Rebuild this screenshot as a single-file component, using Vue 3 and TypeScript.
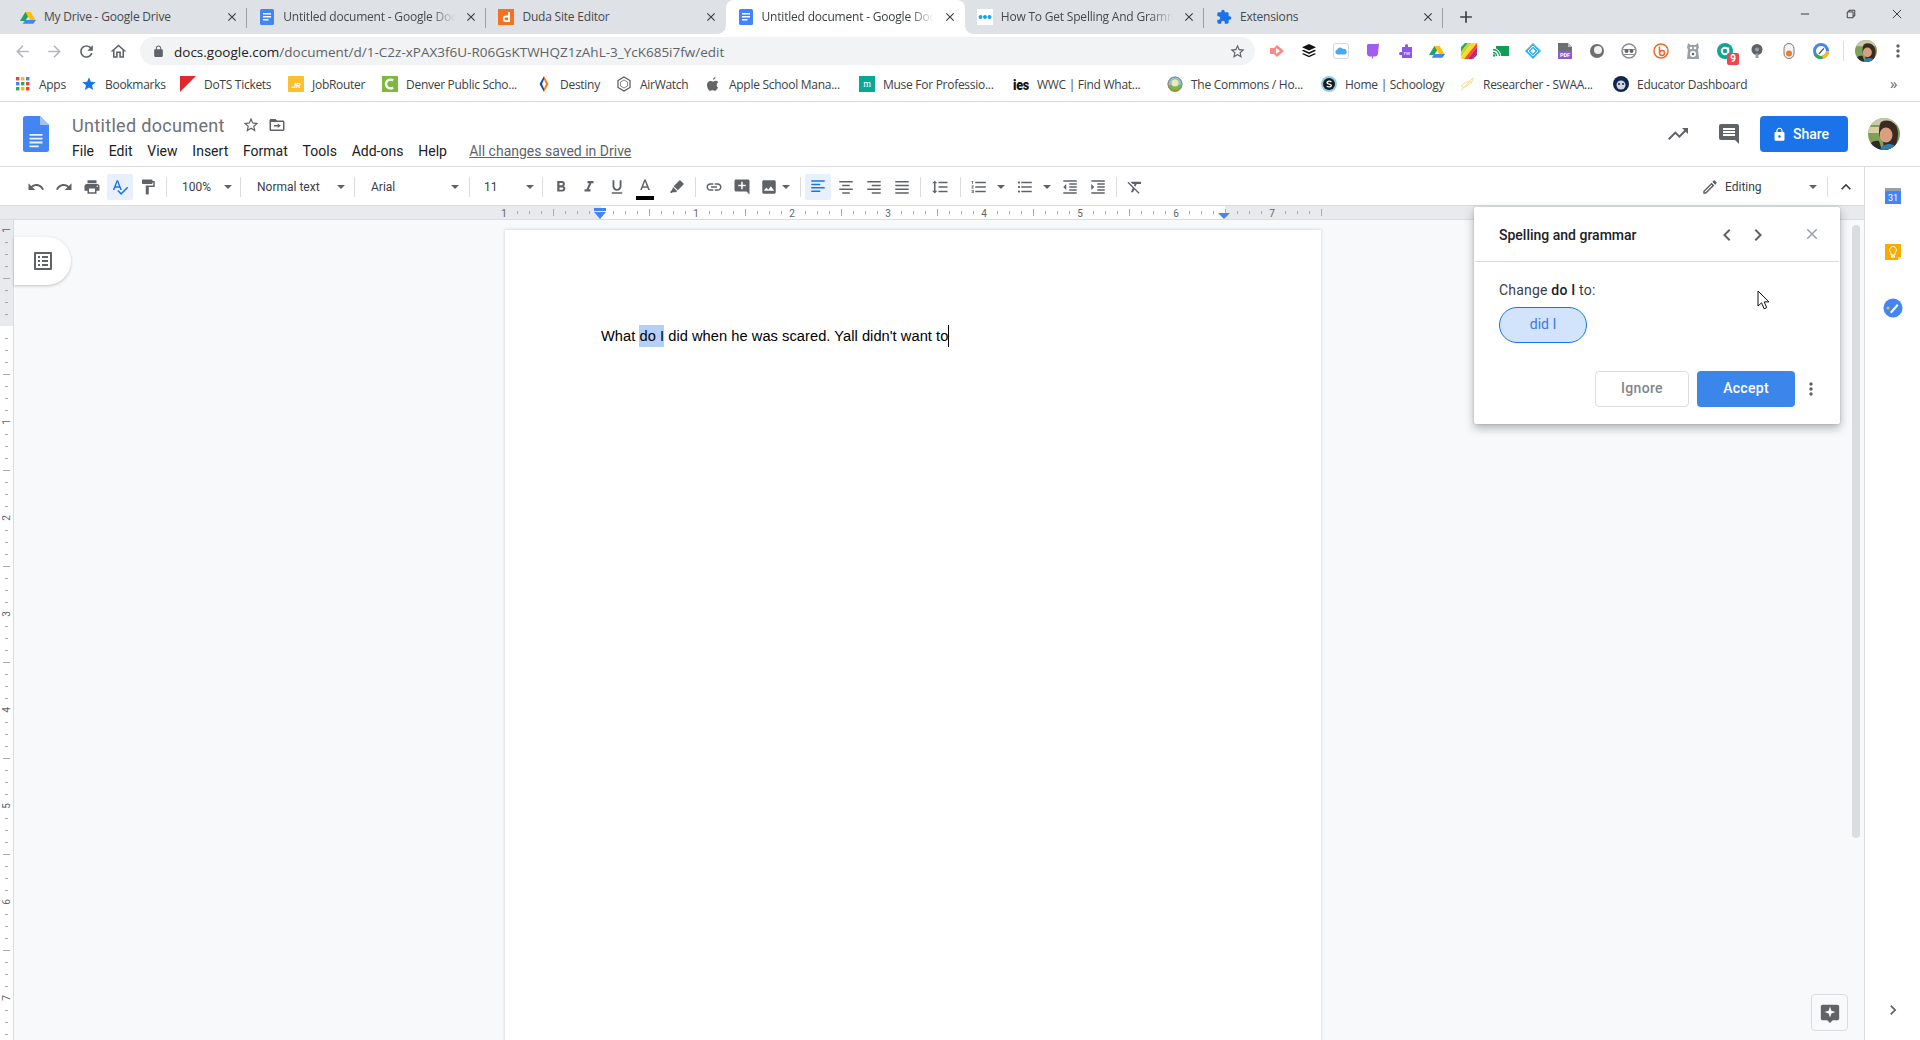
<script setup lang="ts">
const ic: Record<string, string> = {
  undo: 'M12.5 8c-2.65 0-5.05.99-6.9 2.6L2 7v9h9l-3.62-3.62c1.39-1.16 3.16-1.88 5.12-1.88 3.54 0 6.55 2.31 7.6 5.5l2.37-.78C21.08 11.03 17.15 8 12.5 8z',
  redo: 'M18.4 10.6C16.55 8.99 14.15 8 11.5 8c-4.65 0-8.58 3.03-9.96 7.22L3.9 16c1.05-3.19 4.05-5.5 7.6-5.5 1.95 0 3.73.72 5.12 1.88L13 16h9V7l-3.6 3.6z',
  print: 'M19 8H5c-1.66 0-3 1.34-3 3v6h4v4h12v-4h4v-6c0-1.66-1.34-3-3-3zm-3 11H8v-5h8v5zm3-7c-.55 0-1-.45-1-1s.45-1 1-1 1 .45 1 1-.45 1-1 1zm-1-9H6v4h12V3z',
  spell: 'M12.45 16h2.09L9.43 3H7.57L2.46 16h2.09l1.12-3h5.64l1.14 3zm-6.02-5L8.5 5.48 10.57 11H6.43zm15.16.59l-8.09 8.09L9.83 16l-1.41 1.41 5.09 5.09L23 13l-1.41-1.41z',
  paint: 'M18 4V3c0-.55-.45-1-1-1H5c-.55 0-1 .45-1 1v4c0 .55.45 1 1 1h12c.55 0 1-.45 1-1V6h1v4H9v11c0 .55.45 1 1 1h2c.55 0 1-.45 1-1v-9h8V4h-3z',
  bold: 'M15.6 10.79c.97-.67 1.65-1.77 1.65-2.79 0-2.26-1.75-4-4-4H7v14h7.04c2.09 0 3.71-1.7 3.71-3.79 0-1.52-.86-2.82-2.15-3.42zM10 6.5h3c.83 0 1.5.67 1.5 1.5s-.67 1.5-1.5 1.5h-3v-3zm3.5 9H10v-3h3.5c.83 0 1.5.67 1.5 1.5s-.67 1.5-1.5 1.5z',
  italic: 'M10 4v3h2.21l-3.42 8H6v3h8v-3h-2.21l3.42-8H18V4z',
  underline: 'M12 17c3.31 0 6-2.69 6-6V3h-2.5v8c0 1.93-1.57 3.5-3.5 3.5S8.5 12.93 8.5 11V3H6v8c0 3.31 2.69 6 6 6zm-7 2v2h14v-2H5z',
  color: 'M11 2L5.5 16h2.25l1.12-3h6.25l1.12 3h2.25L13 2h-2zm-1.38 9L12 4.67 14.38 11H9.62z',
  hilite: 'M16.6 3.3l4.1 4.1c.4.4.4 1 0 1.4l-7.6 7.6-5.5-5.5 7.6-7.6c.4-.4 1-.4 1.4 0zM6.6 11.9l5.5 5.5-1.6 1.6H6.2L5 20.2 2.6 19l3.1-3.6z',
  link: 'M3.9 12c0-1.71 1.39-3.1 3.1-3.1h4V7H7c-2.76 0-5 2.24-5 5s2.24 5 5 5h4v-1.9H7c-1.71 0-3.1-1.39-3.1-3.1zM8 13h8v-2H8v2zm9-6h-4v1.9h4c1.71 0 3.1 1.39 3.1 3.1s-1.39 3.1-3.1 3.1h-4V17h4c2.76 0 5-2.24 5-5s-2.24-5-5-5z',
  addc: 'M21.99 4c0-1.1-.89-2-1.99-2H4c-1.1 0-2 .9-2 2v12c0 1.1.9 2 2 2h14l4 4-.01-18zM17 11h-4v4h-2v-4H7V9h4V5h2v4h4v2z',
  image: 'M21 19V5c0-1.1-.9-2-2-2H5c-1.1 0-2 .9-2 2v14c0 1.1.9 2 2 2h14c1.1 0 2-.9 2-2zM8.5 12.5l2.5 3.01L14.5 11l4.5 6H5l3.5-4.5z',
  left: 'M3 3h18v2H3zM3 7.5h12v2H3zM3 12h18v2H3zM3 16.5h12v2H3z',
  center: 'M3 4h18v2H3zM7 9h10v2H7zM3 14h18v2H3zM7 19h10v2H7z',
  right: 'M3 4h18v2H3zM9 9h12v2H9zM3 14h18v2H3zM9 19h12v2H9z',
  justify: 'M3 4h18v2H3zM3 9h18v2H3zM3 14h18v2H3zM3 19h18v2H3z',
  spacing: 'M6 7h2.5L5 3.5 1.5 7H4v10H1.5L5 20.5 8.5 17H6V7zm4-2v2h12V5H10zm0 14h12v-2H10v2zm0-6h12v-2H10v2z',
  numbers: 'M2 17h2v.5H3v1h1v.5H2v1h3v-4H2v1zm1-9h1V4H2v1h1v3zm-1 3h1.8L2 13.1v.9h3v-1H3.2L5 10.9V10H2v1zm5-6v2h14V5H7zm0 14h14v-2H7v2zm0-6h14v-2H7v2z',
  bullets: 'M4 10.5c-.83 0-1.5.67-1.5 1.5s.67 1.5 1.5 1.5 1.5-.67 1.5-1.5-.67-1.5-1.5-1.5zm0-6c-.83 0-1.5.67-1.5 1.5S3.17 7.5 4 7.5 5.5 6.83 5.5 6 4.83 4.5 4 4.5zm0 12c-.83 0-1.5.68-1.5 1.5s.68 1.5 1.5 1.5 1.5-.68 1.5-1.5-.67-1.5-1.5-1.5zM7 19h14v-2H7v2zm0-6h14v-2H7v2zm0-8v2h14V5H7z',
  outdent: 'M11 17h10v-2H11v2zm-8-5l4 4V8l-4 4zm0 9h18v-2H3v2zM3 3v2h18V3H3zm8 6h10V7H11v2zm0 4h10v-2H11v2z',
  indent: 'M3 21h18v-2H3v2zM3 8v8l4-4-4-4zm8 9h10v-2H11v2zM3 3v2h18V3H3zm8 6h10V7H11v2zm0 4h10v-2H11v2z',
  clear: 'M3.27 5L2 6.27l6.97 6.97L6.5 19h3l1.57-3.66L16.73 21 18 19.73 3.55 5.27 3.27 5zM6 5v.18L8.82 8h2.4l-.72 1.68 2.1 2.1L14.21 8H20V5H6z',
  pencil: 'M14.06 9.02l.92.92L5.92 19H5v-.92l9.06-9.06M17.66 3c-.25 0-.51.1-.7.29l-1.83 1.83 3.75 3.75 1.83-1.83c.39-.39.39-1.02 0-1.41l-2.34-2.34c-.2-.2-.45-.29-.71-.29zm-3.6 3.19L3 17.25V21h3.75L17.81 9.94l-3.75-3.75z',
  trend: 'M16 6l2.29 2.29-4.88 4.88-4-4L2 16.59 3.41 18l6-6 4 4 6.3-6.29L22 12V6z',
  comment: 'M21.99 4c0-1.1-.89-2-1.99-2H4c-1.1 0-2 .9-2 2v12c0 1.1.9 2 2 2h14l4 4-.01-18zM18 14H6v-2h12v2zm0-3H6V9h12v2zm0-3H6V6h12v2z',
  lock: 'M18 8h-1V6c0-2.76-2.24-5-5-5S7 3.24 7 6v2H6c-1.1 0-2 .9-2 2v10c0 1.1.9 2 2 2h12c1.1 0 2-.9 2-2V10c0-1.1-.9-2-2-2zm-6 9c-1.1 0-2-.9-2-2s.9-2 2-2 2 .9 2 2-.9 2-2 2zm3.1-9H8.9V6c0-1.71 1.39-3.1 3.1-3.1 1.71 0 3.1 1.39 3.1 3.1v2z',
  star: 'M22 9.24l-7.19-.62L12 2 9.19 8.63 2 9.24l5.46 4.73L5.82 21 12 17.27 18.18 21l-1.63-7.03L22 9.24zM12 15.4l-3.76 2.27 1-4.28-3.32-2.88 4.38-.38L12 6.1l1.71 4.04 4.38.38-3.32 2.88 1 4.28L12 15.4z',
  folder: 'M20 6h-8l-2-2H4c-1.1 0-2 .9-2 2v12c0 1.1.9 2 2 2h16c1.1 0 2-.9 2-2V8c0-1.1-.9-2-2-2zm0 12H4V8h16v10zM13 10v2H8v2h5v2l4-3z',
  toc: 'M19 5v14H5V5h14m1.1-2H3.9c-.5 0-.9.4-.9.9v16.2c0 .4.4.9.9.9h16.2c.4 0 .9-.5.9-.9V3.9c0-.5-.5-.9-.9-.9zM11 7h6v2h-6V7zm0 4h6v2h-6v-2zm0 4h6v2h-6zM7 7h2v2H7zm0 4h2v2H7zm0 4h2v2H7z',
  back: 'M20 11H7.83l5.59-5.59L12 4l-8 8 8 8 1.41-1.41L7.83 13H20v-2z',
  forward: 'M12 4l-1.41 1.41L16.17 11H4v2h12.17l-5.58 5.59L12 20l8-8z',
  refresh: 'M17.65 6.35C16.2 4.9 14.21 4 12 4c-4.42 0-7.99 3.58-7.99 8s3.57 8 7.99 8c3.73 0 6.84-2.55 7.73-6h-2.08c-.82 2.33-3.04 4-5.65 4-3.31 0-6-2.69-6-6s2.69-6 6-6c1.66 0 3.14.69 4.22 1.78L13 11h7V4l-2.35 2.35z',
  home: 'M12 5.69l5 4.5V18h-2v-6H9v6H7v-7.81l5-4.5M12 3L2 12h3v8h6v-6h2v6h6v-8h3L12 3z',
  close: 'M19 6.41L17.59 5 12 10.59 6.41 5 5 6.41 10.59 12 5 17.59 6.41 19 12 13.41 17.59 19 19 17.59 13.41 12z',
  chevL: 'M15.41 7.41L14 6l-6 6 6 6 1.41-1.41L10.83 12z',
  chevR: 'M10 6L8.59 7.41 13.17 12l-4.58 4.59L10 18l6-6z',
  chevU: 'M12 8l-6 6 1.41 1.41L12 10.83l4.59 4.58L18 14z',
  dots: 'M12 8c1.1 0 2-.9 2-2s-.9-2-2-2-2 .9-2 2 .9 2 2 2zm0 2c-1.1 0-2 .9-2 2s.9 2 2 2 2-.9 2-2-.9-2-2-2zm0 6c-1.1 0-2 .9-2 2s.9 2 2 2 2-.9 2-2-.9-2-2-2z',
  puzzle: 'M20.5 11H19V7c0-1.1-.9-2-2-2h-4V3.5C13 2.12 11.88 1 10.5 1S8 2.12 8 3.5V5H4c-1.1 0-1.99.9-1.99 2v3.8H3.5c1.49 0 2.7 1.21 2.7 2.7s-1.21 2.7-2.7 2.7H2V20c0 1.1.9 2 2 2h3.8v-1.5c0-1.49 1.21-2.7 2.7-2.7 1.49 0 2.7 1.21 2.7 2.7V22H17c1.1 0 2-.9 2-2v-4h1.5c1.38 0 2.5-1.12 2.5-2.5S21.88 11 20.5 11z',
}

interface Tab { title: string; icon: string; active?: boolean; sep?: boolean; fade?: boolean }
const tabs: Tab[] = [
  { title: 'My Drive - Google Drive', icon: 'drive', sep: true },
  { title: 'Untitled document - Google Docs', icon: 'docs', sep: true, fade: true },
  { title: 'Duda Site Editor', icon: 'duda' },
  { title: 'Untitled document - Google Docs', icon: 'docs', active: true, fade: true },
  { title: 'How To Get Spelling And Grammar', icon: 'dotsfav', sep: true, fade: true },
  { title: 'Extensions', icon: 'puzz', sep: true },
]

const bookmarks = [
  { t: 'Apps', i: 'apps', w: 66 },
  { t: 'Bookmarks', i: 'bstar', w: 99 },
  { t: 'DoTS Tickets', i: 'dots-t', w: 108 },
  { t: 'JobRouter', i: 'jr', w: 94 },
  { t: 'Denver Public Scho...', i: 'dps', w: 154 },
  { t: 'Destiny', i: 'destiny', w: 80 },
  { t: 'AirWatch', i: 'air', w: 89 },
  { t: 'Apple School Mana...', i: 'apple', w: 154 },
  { t: 'Muse For Professio...', i: 'muse', w: 154 },
  { t: 'WWC | Find What...', i: 'ies', w: 154 },
  { t: 'The Commons / Ho...', i: 'commons', w: 154 },
  { t: 'Home | Schoology', i: 'school', w: 138 },
  { t: 'Researcher - SWAA...', i: 'research', w: 154 },
  { t: 'Educator Dashboard', i: 'edu', w: 200 },
]

const extensions = ['e-red', 'e-stack', 'e-cloud', 'e-tag', 'e-rw', 'drive', 'e-color', 'e-cast', 'e-diamond', 'e-pdf', 'e-ring', 'e-glass', 'e-b', 'e-owl', 'e-a', 'e-bulb', 'e-pill', 'e-compass']

interface Tool { k: 'btn' | 'sep' | 'sel' | 'arrow'; i?: string; w?: number; ml?: number; on?: boolean; text?: string; pad?: number; extra?: string }
const tools: Tool[] = [
  { k: 'btn', i: 'undo', w: 28 }, { k: 'btn', i: 'redo', w: 28 }, { k: 'btn', i: 'print', w: 28 },
  { k: 'btn', i: 'spell', w: 28, on: true }, { k: 'btn', i: 'paint', w: 28 },
  { k: 'sep', ml: 4 },
  { k: 'sel', text: '100%', w: 65, ml: 4, pad: 11 },
  { k: 'sep', ml: 4 },
  { k: 'sel', text: 'Normal text', w: 104, ml: 4, pad: 12 },
  { k: 'sep', ml: 5 },
  { k: 'sel', text: 'Arial', w: 104, ml: 4, pad: 12 },
  { k: 'sep', ml: 6 },
  { k: 'sel', text: '11', w: 64, ml: 4, pad: 10 },
  { k: 'sep', ml: 4 },
  { k: 'btn', i: 'bold', w: 28, ml: 4 }, { k: 'btn', i: 'italic', w: 28 }, { k: 'btn', i: 'underline', w: 28 },
  { k: 'btn', i: 'color', w: 28, extra: 'bar' }, { k: 'btn', i: 'hilite', w: 36 },
  { k: 'sep' },
  { k: 'btn', i: 'link', w: 28, ml: 4 }, { k: 'btn', i: 'addc', w: 28 }, { k: 'btn', i: 'image', w: 26 },
  { k: 'arrow', w: 8 },
  { k: 'sep', ml: 10 },
  { k: 'btn', i: 'left', w: 28, ml: 3, on: true }, { k: 'btn', i: 'center', w: 28 }, { k: 'btn', i: 'right', w: 28 }, { k: 'btn', i: 'justify', w: 28 },
  { k: 'sep', ml: 4 },
  { k: 'btn', i: 'spacing', w: 28, ml: 5 },
  { k: 'sep', ml: 6 },
  { k: 'btn', i: 'numbers', w: 28, ml: 4 }, { k: 'arrow', w: 14, ml: 1 },
  { k: 'btn', i: 'bullets', w: 28, ml: 3 }, { k: 'arrow', w: 14, ml: 1 },
  { k: 'btn', i: 'outdent', w: 28, ml: 2 }, { k: 'btn', i: 'indent', w: 28 },
  { k: 'sep', ml: 4 },
  { k: 'btn', i: 'clear', w: 28, ml: 4 },
]

const menus = ['File', 'Edit', 'View', 'Insert', 'Format', 'Tools', 'Add-ons', 'Help']

const hTicks = Array.from({ length: 69 }, (_, i) => ({
  x: 505 + 12 * i,
  kind: i % 8 === 0 ? 'label' : i % 8 === 4 ? 'long' : 'short',
  n: Math.abs(i / 8 - 1),
}))
const vTicks = Array.from({ length: 68 }, (_, i) => ({
  y: 10 + 12 * i,
  kind: i % 8 === 0 ? 'label' : i % 8 === 4 ? 'long' : 'short',
  n: Math.abs(i / 8 - 1),
}))
</script>

<template>
  <div class="root">
    <svg class="defs" aria-hidden="true">
      <defs>
        <symbol id="drive" viewBox="0 0 24 24">
          <path d="M8 3h8l-8 13.5H0z" fill="#1ea362" transform="translate(0 1.5)" />
          <path d="M8 3h8l8 13.5h-8z" fill="#ffc107" transform="translate(0 1.5)" />
          <path d="M8 16.5h16L20 22H4z" fill="#4285f4" />
        </symbol>
        <symbol id="docs" viewBox="0 0 16 16">
          <rect x="1" width="14" height="16" rx="1.5" fill="#4285f4" />
          <path d="M4 4h8v1.6H4zM4 7h8v1.6H4zM4 10h5.5v1.6H4z" fill="#fff" />
        </symbol>
        <symbol id="duda" viewBox="0 0 16 16">
          <rect width="16" height="16" fill="#f5701f" />
          <path d="M10 3h2v10H8a3.2 3.2 0 0 1 0-6.4h2zM8 8.4a1.4 1.4 0 0 0 0 2.8h2V8.4z" fill="#fff" />
        </symbol>
        <symbol id="dotsfav" viewBox="0 0 16 16">
          <rect width="16" height="16" fill="#fff" />
          <circle cx="3.5" cy="8" r="2" fill="#12a5ea" /><circle cx="8" cy="8" r="2" fill="#12a5ea" /><circle cx="12.5" cy="8" r="2" fill="#12a5ea" />
        </symbol>
        <symbol id="puzz" viewBox="0 0 24 24"><path :d="ic.puzzle" fill="#1a73e8" /></symbol>
        <symbol id="apps" viewBox="0 0 16 16">
          <g>
            <rect width="3.4" height="3.4" x="1" y="1" fill="#ea4335" /><rect width="3.4" height="3.4" x="6" y="1" fill="#fbbc04" /><rect width="3.4" height="3.4" x="11" y="1" fill="#4285f4" />
            <rect width="3.4" height="3.4" x="1" y="6" fill="#4285f4" /><rect width="3.4" height="3.4" x="6" y="6" fill="#34a853" /><rect width="3.4" height="3.4" x="11" y="6" fill="#ea4335" />
            <rect width="3.4" height="3.4" x="1" y="11" fill="#34a853" /><rect width="3.4" height="3.4" x="6" y="11" fill="#fbbc04" /><rect width="3.4" height="3.4" x="11" y="11" fill="#ea4335" />
          </g>
        </symbol>
        <symbol id="bstar" viewBox="0 0 24 24"><path d="M12 17.27L18.18 21l-1.64-7.03L22 9.24l-7.19-.61L12 2 9.19 8.63 2 9.24l5.46 4.73L5.82 21z" fill="#1a73e8" /></symbol>
        <symbol id="dots-t" viewBox="0 0 16 16"><path d="M0 0h16L0 16z" fill="#e3282d" /></symbol>
        <symbol id="jr" viewBox="0 0 16 16"><rect width="16" height="16" rx="1" fill="#fbc02d" /><text x="8" y="11.5" font-size="8" font-family="Roboto" font-style="italic" font-weight="700" text-anchor="middle" fill="#fff">JR</text></symbol>
        <symbol id="dps" viewBox="0 0 16 16"><rect width="16" height="16" fill="#7cb93e" /><path d="M11.8 3.6A5.6 5.6 0 1 0 11.8 12.4L10.4 10.6A3.2 3.2 0 1 1 10.4 5.4z" fill="#fff" /></symbol>
        <symbol id="destiny" viewBox="0 0 16 16"><path d="M8 0L3.500 8 8 16V12.500L6 8 8 3.500z" fill="#1a4ea1" /><path d="M8 0l4.500 8L8 16V12.500L10 8 8 3.500z" fill="#f47b20" /></symbol>
        <symbol id="air" viewBox="0 0 16 16"><path d="M8 1l6 3.500v7L8 15l-6-3.500v-7z" fill="none" stroke="#555" stroke-width="1.200" /><path d="M8 4l3.500 2v4L8 12l-3.500-2V6z" fill="none" stroke="#888" /></symbol>
        <symbol id="apple" viewBox="0 0 16 16"><path d="M10.500 1c.1 1.300-1 2.700-2.400 2.700C8 2.400 9.200 1.100 10.500 1zM13 11.300c-.6 1.400-1.800 3.500-3 3.500-1 0-1.300-.6-2.400-.6-1.200 0-1.500.6-2.400.6C3.600 14.800 2 11.700 2 9c0-2.600 1.700-4.100 3.300-4.100 1.100 0 1.900.7 2.500.7s1.600-.8 2.800-.8c.6 0 2 .2 2.700 1.400-2.200 1.400-1.800 4.200-.3 5.100z" fill="#666" /></symbol>
        <symbol id="muse" viewBox="0 0 16 16"><rect width="16" height="16" fill="#08a893" /><text x="8" y="11" font-size="10" font-family="Liberation Serif" text-anchor="middle" fill="#fff">m</text></symbol>
        <symbol id="ies" viewBox="0 0 16 16"><text x="0" y="14" font-size="14" font-family="Roboto" font-weight="900" textLength="16" lengthAdjust="spacingAndGlyphs" fill="#111">ies</text></symbol>
        <symbol id="commons" viewBox="0 0 16 16"><circle cx="8" cy="8" r="7.500" fill="#7dc6e8" /><path d="M1 9h14a7 7 0 0 1-14 0z" fill="#7ab648" /><circle cx="8" cy="7" r="3.500" fill="#f4e6b0" /><circle cx="8" cy="8" r="7" fill="none" stroke="#a97b3a" /></symbol>
        <symbol id="school" viewBox="0 0 16 16"><circle cx="8" cy="8" r="8" fill="#8fcdf0" /><circle cx="8" cy="8" r="6" fill="#1b1b1b" /><path d="M10.500 5.800C9.500 5 6 4.800 6 6.700c0 2 4.300 1 4.300 2.900 0 1.700-3.100 1.500-4.600.6" fill="none" stroke="#fff" stroke-width="1.300" /></symbol>
        <symbol id="research" viewBox="0 0 16 16"><path d="M2 14C5 13 11 4 14 2 15 5 6 13 3 11 2 8 9 4 13 7" fill="none" stroke="#f4d98a" stroke-width="1" /></symbol>
        <symbol id="edu" viewBox="0 0 16 16"><circle cx="8" cy="8" r="8" fill="#10264f" /><circle cx="8" cy="9" r="4.500" fill="#cfd8dc" /><circle cx="6" cy="8" r="1" fill="#10264f" /><circle cx="10" cy="8" r="1" fill="#10264f" /></symbol>

        <symbol id="e-red" viewBox="0 0 16 16"><path d="M1 5h4l3-3 7 6-7 6-3-3H1z" fill="#fa8a88" /><path d="M7 5l4 3-4 3z" fill="#fff" /></symbol>
        <symbol id="e-stack" viewBox="0 0 16 16"><path d="M8 1l7 3.200-7 3.200L1 4.200z M2.500 6.800L8 9.300l5.500-2.500L15 7.700l-7 3.200-7-3.200z M2.500 10.200L8 12.700l5.500-2.500 1.500.9L8 14.300 1 11.100z" fill="#111" /></symbol>
        <symbol id="e-cloud" viewBox="0 0 16 16"><rect x=".5" y=".5" width="15" height="15" rx="2.500" fill="#fff" stroke="#d5d7da" /><path d="M4.500 11.500A2.500 2.500 0 0 1 4.200 6.600 3.200 3.200 0 0 1 10 6a2.800 2.800 0 0 1 1.600 5.500z" fill="#4aa8ef" /></symbol>
        <symbol id="e-tag" viewBox="0 0 16 16"><path d="M3 1h9l2-.5-1 10c0 2-1.500 3-3 3H8v2H7v-2H5c-1.500 0-3-1-3-3V2z" fill="#a15cf2" /></symbol>
        <symbol id="e-rw" viewBox="0 0 16 16"><path d="M5 4h3V2.500a1.500 1.500 0 0 1 3 0V4h4v11H5v-3H3.500a1.500 1.500 0 0 1 0-3H5z" fill="#8e55ee" /><text x="10" y="12" font-size="6" font-family="Roboto" text-anchor="middle" fill="#fff">rw</text></symbol>
        <symbol id="e-color" viewBox="0 0 16 16">
          <path d="M0 4L4 0h3L0 9z" fill="#34a853" /><path d="M7 0h4L0 14V9z" fill="#c2d82c" /><path d="M11 0h5L3 16H0v-2z" fill="#fdd835" /><path d="M16 0v4L7 16H3z" fill="#f4511e" /><path d="M16 4v5L11 16H7z" fill="#d81b60" /><path d="M16 9v3l-4 4h-1z" fill="#5e35b1" />
        </symbol>
        <symbol id="e-cast" viewBox="0 0 16 16"><rect x="3" y="3" width="13" height="10" fill="#0f9d58" /><path d="M0 6.500a6.500 6.500 0 0 1 6.500 6.500M0 9.500a3.500 3.500 0 0 1 3.500 3.500" fill="none" stroke="#fff" stroke-width="3" /><path d="M0 6.500a6.500 6.500 0 0 1 6.500 6.500M0 9.500a3.500 3.500 0 0 1 3.500 3.500" fill="none" stroke="#0f9d58" stroke-width="1.300" /><circle cx="1" cy="12.500" r="1.200" fill="#0f9d58" /></symbol>
        <symbol id="e-diamond" viewBox="0 0 16 16"><path d="M8 0l8 8-8 8-8-8z" fill="#34b3f1" /><path d="M8 3l5 5-5 5-5-5z" fill="none" stroke="#fff" /><path d="M8 5.500L10.500 8 8 10.500 5.500 8z" fill="#fff" /></symbol>
        <symbol id="e-pdf" viewBox="0 0 16 16"><path d="M1 0h10l4 4v12H1z" fill="#6b6f74" /><path d="M11 0l4 4h-4z" fill="#bdc1c6" /><rect x="1" y="8" width="14" height="8" fill="#8e5bd6" /><text x="8" y="14" font-size="5.500" font-weight="700" font-family="Roboto" text-anchor="middle" fill="#fff">PDF</text></symbol>
        <symbol id="e-ring" viewBox="0 0 16 16"><circle cx="8" cy="8" r="7" fill="#6f6f6f" /><circle cx="9" cy="7" r="4" fill="#f1f1f1" /></symbol>
        <symbol id="e-glass" viewBox="0 0 16 16"><circle cx="8" cy="8" r="7" fill="#fff" stroke="#8a8d91" stroke-width="1.500" /><path d="M2 6.500h12" stroke="#8a8d91" /><circle cx="5.500" cy="8" r="2" fill="#666" /><circle cx="10.500" cy="8" r="2" fill="#666" /><path d="M3 11.500h10" stroke="#8a8d91" /></symbol>
        <symbol id="e-b" viewBox="0 0 16 16"><circle cx="8" cy="8" r="7" fill="#fff" stroke="#f1672b" stroke-width="1.500" /><circle cx="9" cy="10" r="2.500" fill="none" stroke="#f1672b" stroke-width="1.500" /><path d="M6.500 3.500V10" stroke="#f1672b" stroke-width="1.500" /></symbol>
        <symbol id="e-owl" viewBox="0 0 16 16"><path d="M3 0l2.500 2h5L13 0l1 5-1 1 1 10H2L3 6 2 5z" fill="#9aa0a6" /><circle cx="8" cy="11" r="3" fill="#fff" /><circle cx="8" cy="11" r="1.300" fill="#5f6368" /><circle cx="6" cy="5" r="1.300" fill="#fff" /><circle cx="10" cy="5" r="1.300" fill="#fff" /></symbol>
        <symbol id="e-a" viewBox="0 0 16 16"><circle cx="8" cy="8" r="8" fill="#12a594" /><circle cx="8" cy="8" r="3.200" fill="none" stroke="#fff" stroke-width="2" /><path d="M11.200 4.500v7.500" stroke="#fff" stroke-width="2" /></symbol>
        <symbol id="e-bulb" viewBox="0 0 16 16"><circle cx="8" cy="6.500" r="5.500" fill="#5f6368" /><circle cx="8" cy="6.500" r="2" fill="#9aa0a6" /><rect x="6.500" y="10.500" width="3" height="4.500" fill="#9aa0a6" /></symbol>
        <symbol id="e-pill" viewBox="0 0 16 16"><rect x="3" y=".5" width="10" height="15" rx="5" fill="#f1f3f4" stroke="#777" /><circle cx="8" cy="10.500" r="3" fill="#ef7c26" /></symbol>
        <symbol id="e-compass" viewBox="0 0 16 16"><circle cx="8" cy="8" r="6.500" fill="#fff" stroke="#4285f4" stroke-width="3" /><path d="M14.500 8a6.500 6.500 0 0 1-5 6.300" fill="none" stroke="#fbbc04" stroke-width="3" /><path d="M2 11a6.500 6.500 0 0 0 7 3.300" fill="none" stroke="#34a853" stroke-width="3" /><path d="M5.500 10.500l5-5.500 .8.800-5 5.500z" fill="#333" /></symbol>
      </defs>
    </svg>

    <div class="tabbar">
      <div v-for="(t, i) in tabs" :key="i" class="tab" :class="{ active: t.active, sep: t.sep }">
        <svg class="fav"><use :href="'#' + t.icon" /></svg>
        <span class="tab-title" :class="{ fade: t.fade }">{{ t.title }}</span>
        <svg class="tab-x" viewBox="0 0 24 24"><path :d="ic.close" /></svg>
      </div>
      <svg class="newtab" viewBox="0 0 24 24"><path d="M19 13h-6v6h-2v-6H5v-2h6V5h2v6h6z" /></svg>
      <div class="winctl">
        <span class="win"><svg viewBox="0 0 12 12"><path d="M1 6h10" /></svg></span>
        <span class="win"><svg viewBox="0 0 12 12"><path d="M1.500 3.500h7v7h-7zM3.500 3.500v-2h7v7h-2" /></svg></span>
        <span class="win"><svg viewBox="0 0 12 12"><path d="M1 1l10 10M11 1L1 11" /></svg></span>
      </div>
    </div>

    <div class="omnibar">
      <span class="nav dim"><svg viewBox="0 0 24 24"><path :d="ic.back" /></svg></span>
      <span class="nav dim"><svg viewBox="0 0 24 24"><path :d="ic.forward" /></svg></span>
      <span class="nav"><svg viewBox="0 0 24 24"><path :d="ic.refresh" /></svg></span>
      <span class="nav"><svg viewBox="0 0 24 24"><path :d="ic.home" /></svg></span>
      <div class="address">
        <svg class="addr-lock" viewBox="0 0 24 24"><path d="M18 8h-1V6c0-2.760-2.240-5-5-5S7 3.240 7 6v2H6c-1.100 0-2 .9-2 2v10c0 1.100.9 2 2 2h12c1.100 0 2-.9 2-2V10c0-1.100-.9-2-2-2zM8.900 8V6c0-1.710 1.390-3.100 3.100-3.100 1.710 0 3.100 1.390 3.100 3.100v2z" /></svg>
        <span class="url"><b>docs.google.com</b>/document/d/1-C2z-xPAX3f6U-R06GsKTWHQZ1zAhL-3_YcK685i7fw/edit</span>
        <svg class="addr-star" viewBox="0 0 24 24"><path :d="ic.star" /></svg>
      </div>
      <div class="exts">
        <span v-for="e in extensions" :key="e" class="ext">
          <svg><use :href="'#' + e" /></svg>
          <span v-if="e === 'e-a'" class="badge">9</span>
        </span>
      </div>
      <span class="omni-sep"></span>
      <svg class="chrome-avatar" viewBox="0 0 32 32">
        <defs><clipPath id="av1"><circle cx="16" cy="16" r="16" /></clipPath></defs>
        <g clip-path="url(#av1)">
          <rect width="32" height="32" fill="#7fa05a" />
          <rect width="32" height="9" fill="#c9c8a8" />
          <path d="M13 6c8-4 17 1 17 11 0 6-2 11-5 15H14c3-5 1-10-3-14 0-5 0-9 2-12z" fill="#3a2a26" />
          <ellipse cx="18" cy="18" rx="6.500" ry="7" fill="#d9a07f" />
          <path d="M0 32c1-7 5-10 11-9l3 9z" fill="#2b2b2b" />
          <path d="M12 32c1-4 6-6 9-6s8 2 9 6z" fill="#2f7fa8" />
        </g>
      </svg>
      <svg class="chrome-dots" viewBox="0 0 24 24"><path :d="ic.dots" /></svg>
    </div>

    <div class="bookmarks">
      <span v-for="b in bookmarks" :key="b.t" class="bm" :style="{ width: b.w + 'px' }">
        <svg class="fav"><use :href="'#' + b.i" /></svg>
        <span>{{ b.t }}</span>
      </span>
      <span class="bm-more">»</span>
    </div>

    <header class="docs-head">
      <svg class="docs-logo" viewBox="0 0 26 36">
        <path d="M2.500 0H17l9 9v24.500a2.500 2.500 0 0 1-2.500 2.500h-21A2.500 2.500 0 0 1 0 33.500v-31A2.500 2.500 0 0 1 2.500 0z" fill="#4285f4" />
        <path d="M17 0l9 9h-9z" fill="#a1c2fa" />
        <path d="M6.500 18h13v1.800h-13zM6.500 21.800h13v1.800h-13zM6.500 25.600h13v1.800h-13zM6.500 29.400h9.300v1.800H6.500z" fill="#f1f1f1" />
      </svg>
      <div class="head-mid">
        <div class="title-row">
          <span class="doc-title">Untitled document</span>
          <svg class="title-ic star" viewBox="0 0 24 24"><path :d="ic.star" /></svg>
          <svg class="title-ic" viewBox="0 0 24 24"><path :d="ic.folder" /></svg>
        </div>
        <nav class="menu-row">
          <span v-for="m in menus" :key="m" class="menu-item">{{ m }}</span>
          <span class="saved">All changes saved in Drive</span>
        </nav>
      </div>
      <svg class="head-ic trend" viewBox="0 0 24 24"><path :d="ic.trend" /></svg>
      <svg class="head-ic comment" viewBox="0 0 24 24"><path :d="ic.comment" /></svg>
      <button class="share">
        <svg viewBox="0 0 24 24"><path :d="ic.lock" /></svg>
        Share
      </button>
      <svg class="docs-avatar" viewBox="0 0 32 32">
        <defs><clipPath id="av2"><circle cx="16" cy="16" r="16" /></clipPath></defs>
        <g clip-path="url(#av2)">
          <rect width="32" height="32" fill="#7fa05a" />
          <rect width="32" height="7" fill="#c9c8a8" />
          <rect y="9" width="11" height="6" fill="#d9cfa0" />
          <path d="M13 4c8-4 17 1 17 11 0 7-2 13-5 17H14c3-6 1-11-3-14 0-6 0-11 2-14z" fill="#3a2a26" />
          <ellipse cx="18" cy="17" rx="6.500" ry="7.500" fill="#d9a07f" />
          <path d="M0 32c1-7 5-10 11-9l3 9z" fill="#2b2b2b" />
          <path d="M12 32c1-4 6-6 9-6s8 2 9 6z" fill="#2f7fa8" />
        </g>
      </svg>
    </header>

    <div class="below">
      <div class="work">
        <div class="toolbar">
          <template v-for="(t, i) in tools" :key="i">
            <span v-if="t.k === 'sep'" class="tsep" :style="{ marginLeft: (t.ml ?? 0) + 'px' }"></span>
            <span v-else-if="t.k === 'sel'" class="tsel" :style="{ width: t.w + 'px', marginLeft: t.ml + 'px', paddingLeft: t.pad + 'px' }">
              {{ t.text }}<i class="caret"></i>
            </span>
            <span v-else-if="t.k === 'arrow'" class="tarrow" :style="{ width: t.w + 'px', marginLeft: (t.ml ?? 0) + 'px' }"><i class="caret"></i></span>
            <span v-else class="tbtn" :class="{ on: t.on, bar: t.extra === 'bar' }" :style="{ width: t.w + 'px', marginLeft: (t.ml ?? 0) + 'px' }">
              <svg viewBox="0 0 24 24"><path :d="ic[t.i as string]" /></svg>
            </span>
          </template>
          <div class="mode">
            <svg viewBox="0 0 24 24"><path :d="ic.pencil" /></svg>
            <span class="mode-text">Editing</span>
            <i class="caret"></i>
            <span class="tsep"></span>
            <svg class="collapse" viewBox="0 0 24 24"><path :d="ic.chevU" /></svg>
          </div>
        </div>

        <svg class="hruler" width="1864" height="14" viewBox="0 0 1864 14">
          <rect width="1864" height="14" fill="#e8eaed" />
          <rect x="601" width="624" height="14" fill="#fff" />
          <rect y="13" width="1864" height="1" fill="#dadce0" />
          <template v-for="t in hTicks" :key="t.x">
            <text v-if="t.kind === 'label' && t.n > 0" :x="t.x - 1" y="10.500" class="rl" text-anchor="middle">{{ t.n }}</text>
            <path v-else-if="t.kind !== 'label'" :d="t.kind === 'long' ? `M${t.x + .5} 3v7` : `M${t.x + .5} 5v3`" class="rt" />
          </template>
          <path d="M1321.500 3v7" class="rt" />
          <path d="M594 2h12v3h-12zM594 6h12l-6 7z" fill="#4285f4" />
          <path d="M1218 7h12l-6 6z" fill="#4285f4" />
        </svg>

        <div class="doc-row">
          <svg class="vruler" width="14" height="820" viewBox="0 0 14 820">
            <rect width="14" height="820" fill="#fff" />
            <rect width="14" height="106" fill="#e8eaed" />
            <rect x="13" width="1" height="820" fill="#dadce0" />
            <template v-for="t in vTicks" :key="t.y">
              <text v-if="t.kind === 'label' && t.n > 0" class="rl" text-anchor="middle" :transform="`translate(10 ${t.y}) rotate(-90)`">{{ t.n }}</text>
              <path v-else-if="t.kind !== 'label'" :d="t.kind === 'long' ? `M3 ${t.y + .5}h7` : `M5 ${t.y + .5}h3`" class="rt" />
            </template>
          </svg>
          <div class="canvas">
            <article class="page">
              <p class="body-text">What <span class="hl">do I</span> did when he was scared. Yall didn't want to<i class="text-caret"></i></p>
            </article>
          </div>
        </div>

        <button class="outline-btn"><svg viewBox="0 0 24 24"><path :d="ic.toc" /></svg></button>
        <div class="scroll-thumb"></div>
        <button class="explore-btn">
          <svg viewBox="0 0 24 24"><path d="M20 3H4c-1.100 0-2 .9-2 2v13c0 1.100.9 2 2 2h5l3 3 3-3h5c1.100 0 2-.9 2-2V5c0-1.100-.9-2-2-2zm-8 14l-1.500-4.500L6 11l4.500-1.500L12 5l1.500 4.500L18 11l-4.500 1.500z" /></svg>
        </button>

        <section class="spell">
          <div class="spell-head">
            <span class="spell-title">Spelling and grammar</span>
            <svg class="sp-ic" viewBox="0 0 24 24"><path :d="ic.chevL" /></svg>
            <svg class="sp-ic" viewBox="0 0 24 24"><path :d="ic.chevR" /></svg>
            <svg class="sp-ic sp-x" viewBox="0 0 24 24"><path :d="ic.close" /></svg>
          </div>
          <div class="spell-body">
            <div class="change">Change <b>do I</b> to:</div>
            <div class="chip">did I</div>
            <div class="actions">
              <button class="ignore">Ignore</button>
              <button class="accept">Accept</button>
              <svg class="more" viewBox="0 0 24 24"><path :d="ic.dots" /></svg>
            </div>
          </div>
          <svg class="mouse" width="13" height="20" viewBox="0 0 13 20">
            <path d="M1 1v15l3.600-3.200 2.500 6 2.600-1.100-2.500-5.800H12z" fill="#fff" stroke="#111" stroke-width="1" />
          </svg>
        </section>
      </div>

      <aside class="side">
        <svg class="side-ic" viewBox="0 0 20 20">
          <rect x="2" y="3" width="16" height="15" fill="#4285f4" />
          <rect x="2" y="2" width="16" height="3" fill="#9aa0a6" />
          <text x="10" y="15" font-size="9" font-family="Roboto" text-anchor="middle" fill="#fff">31</text>
        </svg>
        <svg class="side-ic" viewBox="0 0 20 20">
          <path d="M2 2h16v13l-3 3H2z" fill="#f9ab00" />
          <path d="M15 18v-3h3z" fill="#fde293" />
          <path d="M10 4.500a3.500 3.500 0 0 0-2 6.300V13h4v-2.200a3.500 3.500 0 0 0-2-6.300zM8.500 14h3v1.200h-3z" fill="none" stroke="#fff" stroke-width="1" />
        </svg>
        <svg class="side-ic" viewBox="0 0 20 20">
          <circle cx="10" cy="10" r="9.500" fill="#4285f4" />
          <path d="M7 14l7-8 1.500 1.500L8.500 15.500z" fill="#fff" />
          <circle cx="5" cy="10" r="1.500" fill="#fbbc04" />
        </svg>
        <svg class="side-chev" viewBox="0 0 24 24"><path :d="ic.chevR" /></svg>
      </aside>
    </div>
  </div>
</template>

<style>
html, body { margin: 0; padding: 0; overflow: hidden; background: #fff; }
</style>

<style scoped>
.root { width: 1920px; height: 1040px; display: flex; flex-direction: column; overflow: hidden; font-family: Roboto, sans-serif; background: #fff; color: #202124; position: relative; }
.defs { position: absolute; width: 0; height: 0; }

/* Chrome tabs */
.tabbar { height: 34px; flex: none; display: flex; align-items: stretch; background: #dee1e6; padding-left: 8px; box-sizing: border-box; }
.tab { width: 239.2px; flex: none; display: flex; align-items: center; padding: 0 8px 0 12px; box-sizing: border-box; position: relative; }
.tab .fav { margin-right: 8px; }
.tab.sep::after { content: ""; position: absolute; right: 0; top: 8px; height: 20px; width: 1px; background: #9aa0a6; }
.tab.active { background: #fff; border-radius: 8px 8px 0 0; }
.tab.active::before, .tab.active::after { content: ""; position: absolute; bottom: 0; width: 8px; height: 8px; }
.tab.active::before { left: -8px; background: radial-gradient(circle at 0 0, transparent 7.5px, #fff 8px); }
.tab.active::after { right: -8px; background: radial-gradient(circle at 100% 0, transparent 7.5px, #fff 8px); }
.fav { width: 16px; height: 16px; flex: none; }
.tab-title { flex: 1; min-width: 0; overflow: hidden; white-space: nowrap; font: 12px/16px "Open Sans", sans-serif; letter-spacing: -0.2px; color: #45494d; margin-top: -1px; }
.tab-title.fade { -webkit-mask-image: linear-gradient(to right, #000 86%, transparent 100%); mask-image: linear-gradient(to right, #000 86%, transparent 100%); }
.tab.active .tab-title { color: #3c4043; }
.tab-x { width: 14px; height: 14px; flex: none; margin: 0 0 0 9px; fill: #3c4043; }
.newtab { width: 20px; height: 20px; align-self: center; flex: none; margin-left: 13px; fill: #3c4043; }
.winctl { margin-left: auto; display: flex; }
.win { width: 46px; height: 28px; display: flex; align-items: center; justify-content: center; }
.win svg { width: 10px; height: 10px; fill: none; stroke: #202124; stroke-width: 1; overflow: visible; }

/* omnibox */
.omnibar { height: 34px; flex: none; display: flex; align-items: center; padding-left: 6px; box-sizing: border-box; background: #fff; }
.nav { width: 32px; height: 28px; display: flex; align-items: center; justify-content: center; flex: none; }
.nav svg { width: 19px; height: 19px; fill: #5f6368; }
.nav.dim svg { fill: #b4b7bb; }
.address { width: 1115px; height: 28px; margin-left: 6px; border-radius: 14px; background: #f1f3f4; display: flex; align-items: center; flex: none; box-sizing: border-box; padding: 0 9px 0 12px; }
.addr-lock { width: 13px; height: 13px; fill: #5f6368; flex: none; margin-right: 9px; }
.url { flex: 1; font: 13.5px/20px "Open Sans", sans-serif; color: #5f6368; white-space: nowrap; padding-top: 1px; }
.url b { font-weight: 400; color: #202124; }
.addr-star { width: 17px; height: 17px; fill: #5f6368; flex: none; }
.exts { display: flex; margin-left: 6px; flex: none; }
.ext { width: 32px; height: 28px; display: flex; align-items: center; justify-content: center; position: relative; }
.ext svg { width: 16px; height: 16px; }
.badge { position: absolute; left: 18px; top: 16px; width: 12px; height: 12px; border-radius: 2px; background: #f0454b; color: #fff; font: 700 10px/12px Roboto, sans-serif; text-align: center; }
.omni-sep { width: 1px; height: 20px; margin-left: 6px; background: #dadce0; flex: none; }
.chrome-avatar { width: 22px; height: 22px; margin-left: 11px; flex: none; }
.chrome-dots { width: 20px; height: 20px; fill: #5f6368; margin-left: 11px; flex: none; }

/* bookmarks */
.bookmarks { height: 34px; flex: none; display: flex; align-items: center; padding: 0 0 1px 15px; box-sizing: border-box; border-bottom: 1px solid #dadce0; background: #fff; position: relative; }
.bm { display: flex; align-items: center; gap: 8px; flex: none; font: 12px "Open Sans", sans-serif; letter-spacing: -0.28px; color: #3c4043; white-space: nowrap; }
.bm-more { position: absolute; left: 1890px; top: 5px; font: 15px "Open Sans", sans-serif; color: #5f6368; }

/* docs header */
.docs-head { height: 65px; flex: none; display: flex; align-items: center; box-sizing: border-box; border-bottom: 1px solid #dadce0; background: #fff; padding-left: 23px; }
.docs-logo { width: 26px; height: 36px; flex: none; margin-right: 23px; }
.head-mid { flex: 1; display: flex; flex-direction: column; height: 100%; box-sizing: border-box; padding-top: 10px; }
.title-row { display: flex; align-items: center; height: 26px; }
.doc-title { font: 18px Roboto, sans-serif; letter-spacing: .33px; color: #6e7175; }
.title-ic { width: 18px; height: 18px; fill: #5f6368; margin-left: 8px; flex: none; }
.title-ic.star { margin-left: 17px; }
.menu-row { display: flex; align-items: center; height: 26px; position: relative; }
.menu-item { font: 14px Roboto, sans-serif; color: #202124; margin-right: 14.8px; }
.saved { font: 14px Roboto, sans-serif; color: #5f6368; text-decoration: underline; margin-left: 7.5px; }
.head-ic { width: 24px; height: 24px; fill: #5f6368; flex: none; }
.trend { margin-right: 27px; }
.comment { margin-right: 19px; }
.share { width: 88px; height: 36px; border: 0; border-radius: 4px; background: #1a73e8; color: #fff; font: 500 14px Roboto, sans-serif; display: flex; align-items: center; padding: 0 0 0 12px; gap: 6px; flex: none; }
.share svg { width: 15px; height: 15px; fill: #fff; }
.docs-avatar { width: 32px; height: 32px; flex: none; margin: 0 20px; }

/* below header */
.below { flex: 1; min-height: 0; display: flex; }
.work { width: 1864px; flex: none; display: flex; flex-direction: column; position: relative; }
.toolbar { height: 39px; flex: none; display: flex; align-items: center; box-sizing: border-box; padding: 1px 0 0 22px; border-bottom: 1px solid #dadce0; background: #fff; }
.tsep { width: 1px; height: 20px; background: #dadce0; flex: none; }
.tsel { height: 26px; flex: none; display: flex; align-items: center; box-sizing: border-box; font: 12px Roboto, sans-serif; color: #3c4043; position: relative; }
.caret { position: absolute; width: 0; height: 0; border-left: 4px solid transparent; border-right: 4px solid transparent; border-top: 4px solid #5f6368; right: 4px; top: 11px; }
.tarrow { height: 26px; flex: none; position: relative; }
.tarrow .caret { right: 50%; margin-right: -4px; }
.tbtn { height: 26px; flex: none; display: flex; align-items: center; justify-content: center; position: relative; }
.tbtn svg { width: 18px; height: 18px; fill: #5f6368; }
.tbtn.on::before { content: ""; position: absolute; left: 1px; right: 1px; top: 0; bottom: 0; background: #e8f0fe; border-radius: 2px; }
.tbtn.on svg { fill: #1a73e8; position: relative; }
.tbtn.bar::after { content: ""; position: absolute; left: 5px; right: 5px; bottom: 0; height: 4px; background: #000; }
.mode { margin-left: auto; display: flex; align-items: center; position: relative; height: 26px; width: 163px; flex: none; }
.mode > svg:first-child { width: 18px; height: 18px; fill: #5f6368; margin-right: 6px; flex: none; }
.mode-text { font: 12px Roboto, sans-serif; color: #3c4043; width: 84px; }
.mode .caret { position: static; margin-right: 10px; flex: none; }
.collapse { width: 20px; height: 20px; fill: #3c4043; margin-left: 8px; flex: none; }

.hruler { display: block; flex: none; }
.rl { font: 10px Roboto, sans-serif; fill: #5f6368; }
.rt { stroke: #a8acb0; stroke-width: 1; fill: none; }
.doc-row { flex: 1; min-height: 0; display: flex; overflow: hidden; }
.vruler { flex: none; display: block; }
.canvas { flex: 1; background: #f8f9fa; padding: 10px 0 0 491px; overflow: hidden; box-sizing: border-box; }
.page { width: 816px; height: 1056px; background: #fff; box-shadow: 0 0 3px rgba(60, 64, 67, .25); box-sizing: border-box; padding: 95px 96px 0; }
.body-text { margin: 0; font: 14.67px/22px "Liberation Sans", Arial, sans-serif; letter-spacing: .04px; color: #000; white-space: nowrap; }
.hl { display: inline-block; background: #b6cff9; }
.text-caret { display: inline-block; width: 1px; height: 22px; background: #000; vertical-align: top; }

.outline-btn { position: absolute; left: 14px; top: 70px; width: 57px; height: 48px; border: 0; padding: 0 0 0 17px; border-radius: 0 24px 24px 0; background: #fff; box-shadow: 0 1px 3px rgba(60, 64, 67, .3); display: flex; align-items: center; }
.outline-btn svg { width: 24px; height: 24px; fill: #5f6368; }
.scroll-thumb { position: absolute; left: 1852px; top: 58px; width: 8px; height: 613px; border-radius: 4px; background: #dadce0; }
.explore-btn { position: absolute; left: 1811px; top: 827px; width: 37px; height: 37px; border: 1px solid #dadce0; border-radius: 4px; background: #f8f9fa; padding: 0; display: flex; align-items: center; justify-content: center; }
.explore-btn svg { width: 22px; height: 22px; fill: #5f6368; }

/* spell dialog */
.spell { position: absolute; left: 1474px; top: 40px; width: 366px; height: 217px; background: #fff; border-radius: 2px; box-shadow: 0 4px 10px rgba(60, 64, 67, .4), 0 0 2px rgba(60, 64, 67, .25); }
.spell-head { height: 55px; display: flex; align-items: center; box-sizing: border-box; margin: 0 1px; padding: 2px 15px 0 24px; border-bottom: 1px solid #dadce0; }
.spell-title { flex: 1; font: 500 14px Roboto, sans-serif; color: #202124; }
.sp-ic { width: 24px; height: 24px; fill: #5f6368; flex: none; margin-left: 7px; }
.sp-x { width: 18px; height: 18px; fill: #9aa0a6; margin-left: 33px; margin-right: 3px; margin-top: -2px; }
.spell-body { padding: 18px 0 0 25px; }
.change { font: 14px/20px Roboto, sans-serif; letter-spacing: .2px; color: #3c4043; }
.change b { font-weight: 500; color: #202124; }
.chip { width: 88px; height: 36px; margin-top: 7px; box-sizing: border-box; border: 1px solid #1a73e8; border-radius: 18px; background: #d2e3fc; color: #3b78e7; font: 14px/32px Roboto, sans-serif; text-align: center; }
.actions { display: flex; align-items: center; justify-content: flex-end; gap: 8px; margin-top: 28px; padding-right: 21px; }
.actions button { height: 36px; border-radius: 4px; font: 500 14px Roboto, sans-serif; letter-spacing: .3px; padding: 0 0 2px; }
.ignore { width: 94px; background: #fff; border: 1px solid #dadce0; color: #80868b; }
.accept { width: 98px; background: #3b86eb; border: 0; color: #fff; }
.more { width: 20px; height: 20px; margin: 0 -2px; fill: #5f6368; flex: none; }
.mouse { position: absolute; left: 283px; top: 83px; }

/* side panel */
.side { flex: 1; border-left: 1px solid #dadce0; display: flex; flex-direction: column; align-items: center; padding: 19px 0 20px; box-sizing: border-box; gap: 36px; }
.side-ic { width: 20px; height: 20px; flex: none; }
.side-chev { width: 20px; height: 20px; fill: #5f6368; margin-top: auto; flex: none; }
</style>
